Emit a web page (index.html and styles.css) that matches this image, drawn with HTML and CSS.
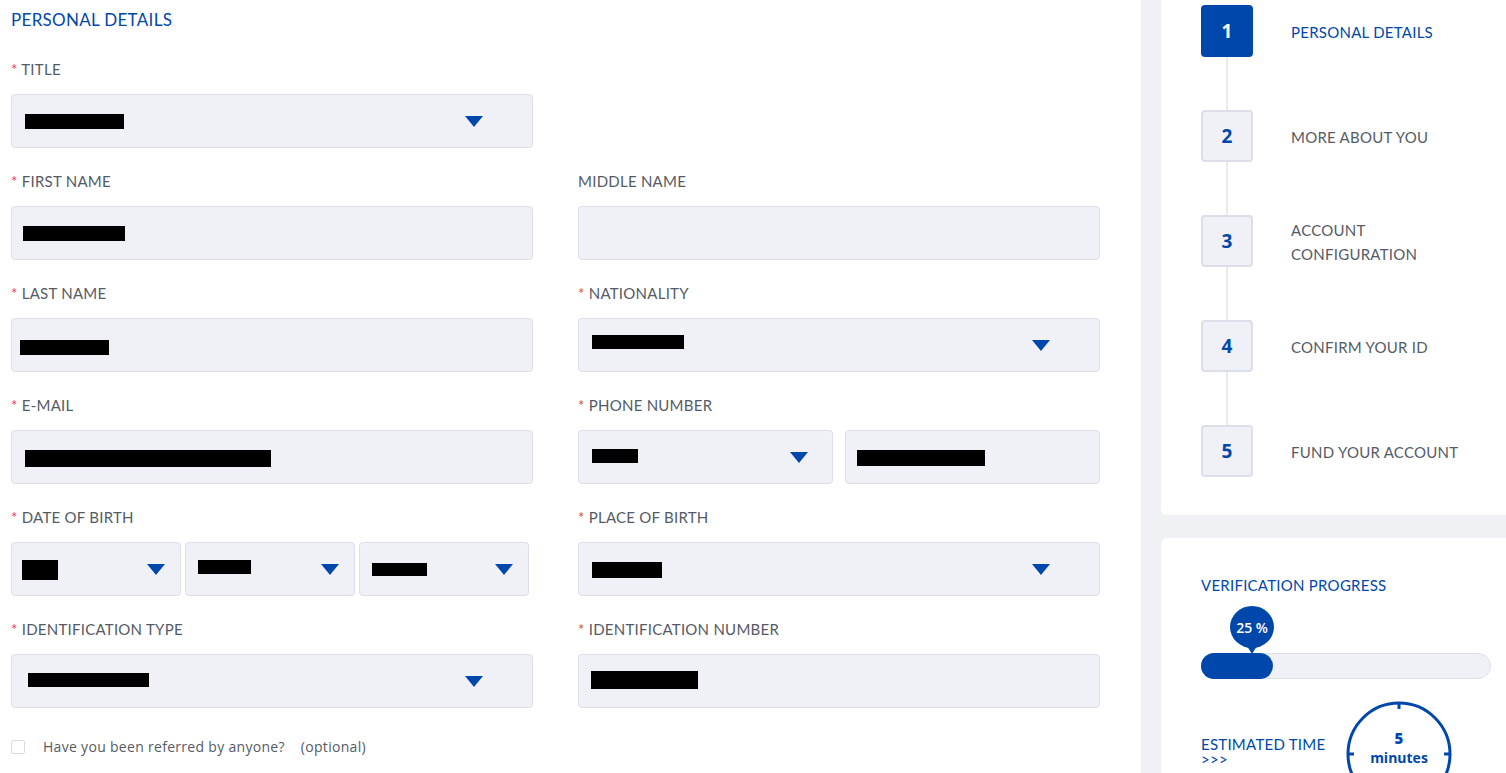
FILE: index.html
```html
<!DOCTYPE html>
<html lang="en">
<head>
    <meta charset="UTF-8">
    <meta name="viewport" content="width=device-width, initial-scale=1.0">
    <title>Open an account - Personal details</title>
    <link rel="stylesheet" href="styles.css">
</head>
<body>
<div class="app">
    <main class="form-area">
        <h2 class="section-title">PERSONAL DETAILS</h2>

        <div class="form-grid">
            <div class="field">
                <label class="field-label"><span class="req">*</span> TITLE</label>
                <div class="input select">
                    <span class="mask" style="width:99px;height:15px"></span>
                    <svg class="arrow" width="18" height="11" viewBox="0 0 18 11"><polygon points="0,0 18,0 9,11"/></svg>
                </div>
            </div>
            <div class="field"></div>

            <div class="field">
                <label class="field-label"><span class="req">*</span> FIRST NAME</label>
                <div class="input"><span class="mask" style="width:102px;height:15px;margin-left:-2px"></span></div>
            </div>
            <div class="field">
                <label class="field-label">MIDDLE NAME</label>
                <div class="input"></div>
            </div>

            <div class="field">
                <label class="field-label"><span class="req">*</span> LAST NAME</label>
                <div class="input"><span class="mask" style="width:89px;height:15px;margin-left:-5px;margin-top:4px"></span></div>
            </div>
            <div class="field">
                <label class="field-label"><span class="req">*</span> NATIONALITY</label>
                <div class="input select">
                    <span class="mask" style="width:92px;height:14px;margin-top:-6px"></span>
                    <svg class="arrow" width="18" height="11" viewBox="0 0 18 11"><polygon points="0,0 18,0 9,11"/></svg>
                </div>
            </div>

            <div class="field">
                <label class="field-label"><span class="req">*</span> E-MAIL</label>
                <div class="input"><span class="mask" style="width:246px;height:17px;margin-top:2px"></span></div>
            </div>
            <div class="field">
                <label class="field-label"><span class="req">*</span> PHONE NUMBER</label>
                <div class="split split-2">
                    <div class="input select narrow">
                        <span class="mask" style="width:46px;height:14px;margin-top:-3px"></span>
                        <svg class="arrow" width="18" height="11" viewBox="0 0 18 11"><polygon points="0,0 18,0 9,11"/></svg>
                    </div>
                    <div class="input"><span class="mask" style="width:128px;height:16px;margin-left:-2px;margin-top:2px"></span></div>
                </div>
            </div>

            <div class="field">
                <label class="field-label"><span class="req">*</span> DATE OF BIRTH</label>
                <div class="split split-3">
                    <div class="input select tight">
                        <span class="mask" style="width:36px;height:20px;margin-left:-2px;margin-top:2px"></span>
                        <svg class="arrow" width="18" height="11" viewBox="0 0 18 11"><polygon points="0,0 18,0 9,11"/></svg>
                    </div>
                    <div class="input select tight">
                        <span class="mask" style="width:53px;height:14px;margin-top:-4px"></span>
                        <svg class="arrow" width="18" height="11" viewBox="0 0 18 11"><polygon points="0,0 18,0 9,11"/></svg>
                    </div>
                    <div class="input select tight">
                        <span class="mask" style="width:55px;height:13px"></span>
                        <svg class="arrow" width="18" height="11" viewBox="0 0 18 11"><polygon points="0,0 18,0 9,11"/></svg>
                    </div>
                </div>
            </div>
            <div class="field">
                <label class="field-label"><span class="req">*</span> PLACE OF BIRTH</label>
                <div class="input select">
                    <span class="mask" style="width:70px;height:16px;margin-top:2px"></span>
                    <svg class="arrow" width="18" height="11" viewBox="0 0 18 11"><polygon points="0,0 18,0 9,11"/></svg>
                </div>
            </div>

            <div class="field">
                <label class="field-label"><span class="req">*</span> IDENTIFICATION TYPE</label>
                <div class="input select">
                    <span class="mask" style="width:121px;height:14px;margin-left:3px;margin-top:-3px"></span>
                    <svg class="arrow" width="18" height="11" viewBox="0 0 18 11"><polygon points="0,0 18,0 9,11"/></svg>
                </div>
            </div>
            <div class="field">
                <label class="field-label"><span class="req">*</span> IDENTIFICATION NUMBER</label>
                <div class="input"><span class="mask" style="width:107px;height:18px;margin-left:-1px;margin-top:-2px"></span></div>
            </div>
        </div>

        <label class="referral">
            <span class="checkbox"></span>
            <span>Have you been referred by anyone?</span>
            <span class="optional">(optional)</span>
        </label>
    </main>

    <aside class="sidebar">
        <div class="card steps">
            <div class="step active">
                <div class="step-head"><span class="step-num">1</span><span class="step-label">PERSONAL DETAILS</span></div>
                <div class="step-line"></div>
            </div>
            <div class="step">
                <div class="step-head"><span class="step-num">2</span><span class="step-label">MORE ABOUT YOU</span></div>
                <div class="step-line"></div>
            </div>
            <div class="step">
                <div class="step-head"><span class="step-num">3</span><span class="step-label">ACCOUNT<br>CONFIGURATION</span></div>
                <div class="step-line"></div>
            </div>
            <div class="step">
                <div class="step-head"><span class="step-num">4</span><span class="step-label">CONFIRM YOUR ID</span></div>
                <div class="step-line"></div>
            </div>
            <div class="step">
                <div class="step-head"><span class="step-num">5</span><span class="step-label">FUND YOUR ACCOUNT</span></div>
            </div>
        </div>

        <div class="card progress-card">
            <div class="card-title">VERIFICATION PROGRESS</div>
            <div class="progress">
                <div class="progress-fill" style="width:25%"></div>
                <div class="bubble">25 %</div>
            </div>
            <div class="estimate">
                <div class="estimate-text">ESTIMATED TIME<br>&gt;&gt;&gt;</div>
                <div class="clock">
                    <svg width="106" height="106" viewBox="0 0 106 106">
                        <circle cx="53" cy="53" r="51" fill="none" stroke="#0047ab" stroke-width="3"/>
                        <line x1="53" y1="2" x2="53" y2="8" stroke="#0047ab" stroke-width="3"/>
                        <line x1="2" y1="53" x2="8" y2="53" stroke="#0047ab" stroke-width="3"/>
                        <line x1="98" y1="53" x2="104" y2="53" stroke="#0047ab" stroke-width="3"/>
                    </svg>
                    <div class="clock-text"><b>5</b><span>minutes</span></div>
                </div>
            </div>
        </div>
    </aside>
</div>
</body>
</html>
```

FILE: styles.css
```css
body {
    margin: 0;
    font-family: Lato, "Open Sans", Arial, sans-serif;
    color: #555b66;
    background-color: #fff;
}

.app {
    display: flex;
    height: 100vh;
    overflow: hidden;
}

/* left form */
.form-area {
    width: 1141px;
    flex-shrink: 0;
    padding: 10px 0 0 11px;
    box-sizing: border-box;
    background-color: #fff;
}

.section-title {
    margin: 0;
    font-size: 17px;
    font-weight: 400;
    letter-spacing: 0.3px;
    line-height: 20px;
    color: #0047ab;
}

.form-grid {
    display: grid;
    grid-template-columns: 522px 522px;
    column-gap: 45px;
    row-gap: 23px;
    margin-top: 29px;
}

.field-label {
    display: block;
    font-size: 15px;
    letter-spacing: 0.25px;
    line-height: 21px;
    color: #555b66;
    margin-bottom: 14px;
}

.req {
    color: #e0443c;
}

.input {
    height: 54px;
    box-sizing: border-box;
    background-color: #f0f1f6;
    border: 1px solid #dcdeea;
    border-radius: 4px;
    display: flex;
    align-items: center;
    padding: 0 13px;
}

.input.select {
    justify-content: space-between;
    padding-right: 49px;
}

.input.select.narrow {
    padding-right: 24px;
}

.input.select.tight {
    padding-right: 15px;
    padding-left: 12px;
}

.mask {
    display: inline-block;
    background-color: #000;
}

.arrow {
    fill: #0047ab;
    display: block;
}

.split {
    display: grid;
    height: 54px;
}

.split-2 {
    grid-template-columns: 255px 255px;
    column-gap: 12px;
}

.split-3 {
    grid-template-columns: 170px 170px 170px;
    column-gap: 4px;
}

.referral {
    display: flex;
    align-items: center;
    margin-top: 29px;
    font-family: "Open Sans", Arial, sans-serif;
    font-size: 14px;
    letter-spacing: 0.3px;
    line-height: 20px;
    color: #555b66;
}

.checkbox {
    width: 14px;
    height: 14px;
    box-sizing: border-box;
    border: 1px solid #d9dbe4;
    border-radius: 2px;
    background-color: #fff;
    margin-right: 18px;
}

.optional {
    margin-left: 16px;
}

/* right sidebar */
.sidebar {
    flex: 1;
    background-color: #f0f1f5;
    padding-left: 20px;
}

.card {
    background-color: #fff;
    border-radius: 0 0 0 6px;
    padding-left: 40px;
}

.steps {
    padding-top: 5px;
    padding-bottom: 38px;
    margin-bottom: 23px;
}

.step-head {
    display: flex;
    align-items: center;
}

.step-num {
    width: 52px;
    height: 52px;
    flex-shrink: 0;
    box-sizing: border-box;
    display: flex;
    align-items: center;
    justify-content: center;
    background-color: #f0f1f6;
    border: 2px solid #dcdeea;
    border-radius: 4px;
    color: #0047ab;
    font-family: "Open Sans", Arial, sans-serif;
    font-weight: 700;
    font-size: 19px;
}

.step-label {
    margin-left: 38px;
    font-size: 15px;
    letter-spacing: 0.25px;
    line-height: 24px;
    padding-top: 1px;
    color: #555b66;
}

.step.active .step-num {
    background-color: #0047ab;
    border-color: #0047ab;
    color: #fff;
}

.step.active .step-label {
    color: #0047ab;
}

.step-line {
    width: 2px;
    height: 53px;
    margin-left: 25px;
    background-color: #e8e9f1;
}

.progress-card {
    border-radius: 6px 0 0 0;
    padding-top: 37px;
    padding-right: 15px;
}

.card-title {
    font-size: 15px;
    letter-spacing: 0.25px;
    line-height: 21px;
    color: #0047ab;
}

.progress {
    position: relative;
    margin-top: 57px;
    height: 26px;
    box-sizing: border-box;
    background-color: #f0f1f6;
    border: 1px solid #dcdeea;
    border-radius: 13px;
}

.progress-fill {
    height: 26px;
    margin: -1px 0 0 -1px;
    background-color: #0047ab;
    border-radius: 13px;
}

.bubble {
    position: absolute;
    left: 28px;
    top: -48px;
    width: 44px;
    height: 42px;
    border-radius: 50%;
    background-color: #0047ab;
    color: #fff;
    font-family: "Open Sans", Arial, sans-serif;
    font-size: 14px;
    font-weight: 600;
    display: flex;
    align-items: center;
    justify-content: center;
}

.bubble::after {
    content: "";
    position: absolute;
    left: 17px;
    bottom: -6px;
    border-left: 5px solid transparent;
    border-right: 5px solid transparent;
    border-top: 8px solid #0047ab;
}

.estimate {
    display: flex;
    align-items: center;
    margin-top: 22px;
}

.estimate-text {
    width: 145px;
    font-size: 15px;
    letter-spacing: 0.25px;
    line-height: 15px;
    margin-top: -4px;
    color: #0047ab;
}

.clock {
    position: relative;
    width: 106px;
    height: 106px;
}

.clock svg {
    display: block;
}

.clock-text {
    position: absolute;
    left: 0;
    right: 0;
    top: 28px;
    display: flex;
    flex-direction: column;
    align-items: center;
    font-family: "Open Sans", Arial, sans-serif;
    font-weight: 700;
    color: #0047ab;
    font-size: 14px;
    line-height: 19px;
}

.clock-text b {
    font-size: 15px;
}
```
